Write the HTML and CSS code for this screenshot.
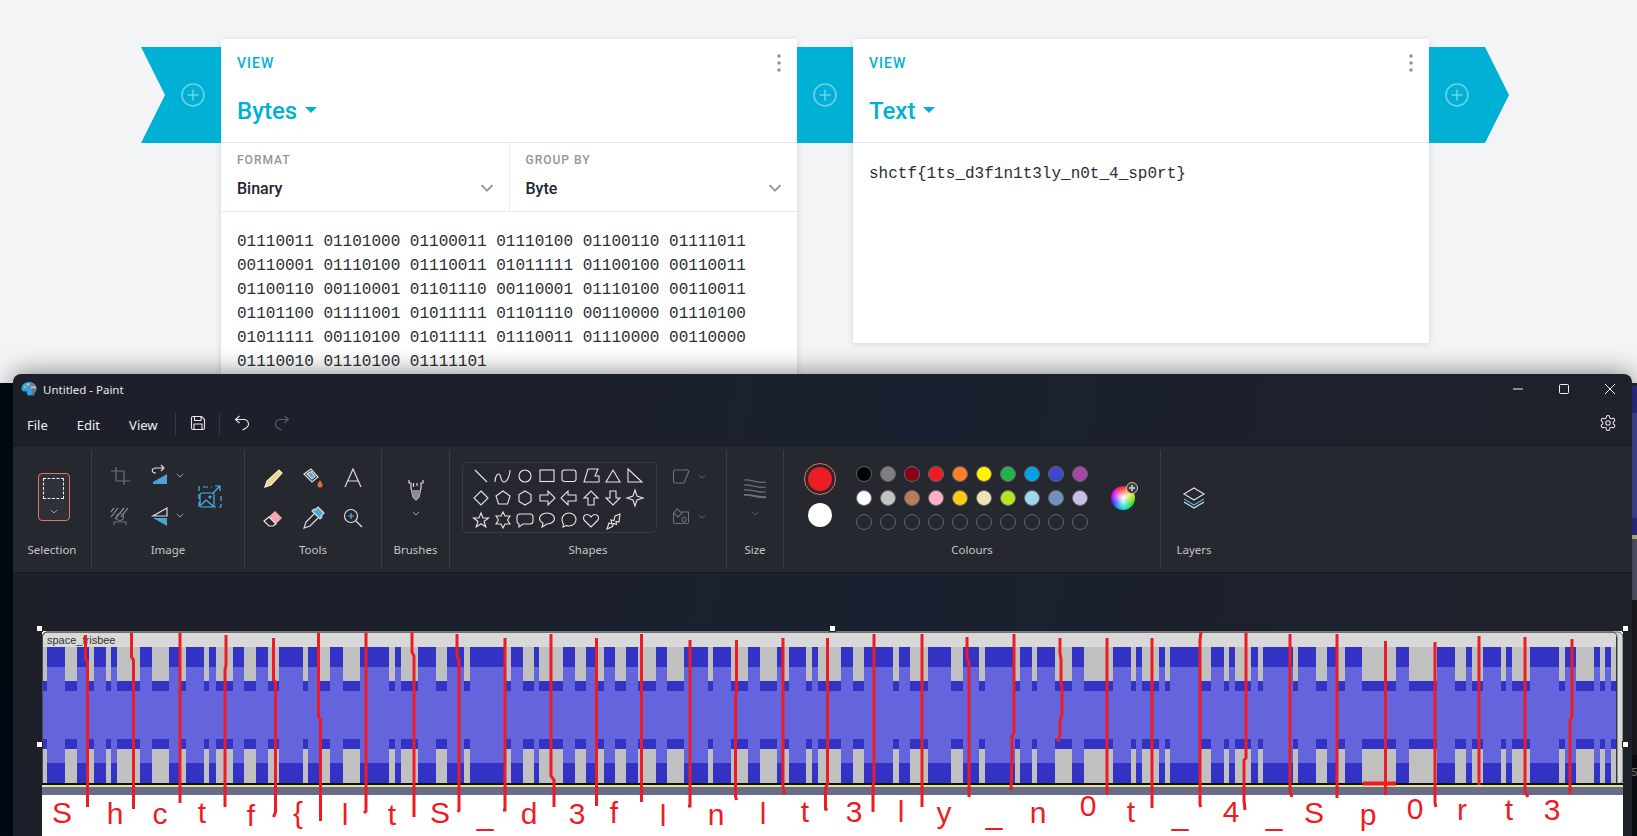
FILE: index.html
```html
<!DOCTYPE html>
<html lang="en">
<head>
  <meta charset="UTF-8" />
  <title>Untitled - Paint</title>
  <link rel="stylesheet" href="styles.css">
</head>
<body>

  <svg class="defs" width="0" height="0">
    <symbol id="plus" viewBox="0 0 24 24"><circle cx="12" cy="12" r="11" /><path d="M12 6.5v11M6.5 12h11" /></symbol>
    <symbol id="dots" viewBox="0 0 4 18"><circle cx="2" cy="2" r="1.8" /><circle cx="2" cy="9" r="1.8" /><circle cx="2" cy="16" r="1.8" /></symbol>
    <symbol id="down" viewBox="0 0 14 8"><path d="M1.5 1.2 7 6.7l5.5-5.5" /></symbol>
  </svg>

  <!-- browser page behind the paint window -->
  <main class="pipeline">
    <div class="ribbon ribbon-start"><svg class="plus"><use href="#plus" /></svg></div>

    <section class="card">
      <header class="card-head">
        <div class="card-top">
          <span class="view-label">View</span>
          <svg class="dots"><use href="#dots" /></svg>
        </div>
        <h2 class="card-title">Bytes <i class="caret"></i></h2>
      </header>
      <div class="options">
        <div class="option">
          <span class="option-label">Format</span>
          <div class="option-value">Binary <svg class="chevron"><use href="#down" /></svg></div>
        </div>
        <div class="option">
          <span class="option-label">Group by</span>
          <div class="option-value">Byte <svg class="chevron"><use href="#down" /></svg></div>
        </div>
      </div>
      <div class="card-code">01110011 01101000 01100011 01110100 01100110 01111011 00110001 01110100 01110011 01011111 01100100 00110011 01100110 00110001 01101110 00110001 01110100 00110011 01101100 01111001 01011111 01101110 00110000 01110100 01011111 00110100 01011111 01110011 01110000 00110000 01110010 01110100 01111101</div>
    </section>

    <div class="ribbon"><svg class="plus"><use href="#plus" /></svg></div>

    <section class="card card-short">
      <header class="card-head">
        <div class="card-top">
          <span class="view-label">View</span>
          <svg class="dots"><use href="#dots" /></svg>
        </div>
        <h2 class="card-title">Text <i class="caret"></i></h2>
      </header>
      <div class="card-code">shctf{1ts_d3f1n1t3ly_n0t_4_sp0rt}</div>
    </section>

    <div class="ribbon ribbon-end"><svg class="plus"><use href="#plus" /></svg></div>
  </main>

  <div class="desktop"></div>
  <div class="desktop-right"><span class="desktop-digit">5</span></div>

  <!-- paint window -->
  <div class="paint">
    <div class="titlebar">
      <svg class="app-icon" viewBox="0 0 16 16">
        <path fill="#2f9fe6" d="M8 1C3.5 1 .5 4 .5 7.6c0 2.6 2 3.4 3.3 2.8 1.2-.5 2.3.2 2.1 1.5-.2 1.700 1 2.600 2.600 2.600C12.500 14.500 15.500 11 15.500 7.500 15.500 3.500 12 1 8 1z" />
        <circle cx="4" cy="6" r="1.300" fill="#7fd858" />
        <circle cx="7" cy="3.500" r="1.300" fill="#f4c430" />
        <circle cx="11" cy="3.800" r="1.300" fill="#ee4b5a" />
        <path fill="#e8b48a" d="M10 5.500h5v2h-5z" />
        <path fill="#9a5a2a" d="M11.500 7.500h2L13.200 15h-1.400z" />
      </svg>
      <span class="app-name">Untitled - Paint</span>
      <div class="win-controls">
        <svg class="win-btn" viewBox="0 0 12 12"><path d="M1 6h10" /></svg>
        <svg class="win-btn" viewBox="0 0 12 12"><rect x="1.500" y="1.500" width="9" height="9" rx="1" /></svg>
        <svg class="win-btn" viewBox="0 0 12 12"><path d="m1 1 10 10M11 1 1 11" /></svg>
      </div>
    </div>

    <div class="menubar">
      <span class="menu-item">File</span>
      <span class="menu-item">Edit</span>
      <span class="menu-item">View</span>
      <i class="menu-sep"></i>
      <svg class="menu-icon menu-save" viewBox="0 0 16 16">
        <path d="M1.500 3a1.500 1.500 0 0 1 1.500-1.500h8.500l3 3V13a1.500 1.500 0 0 1-1.500 1.500H3A1.500 1.500 0 0 1 1.500 13z" />
        <path d="M4.500 1.500v4h6.500v-4M4 14.500V9h8v5.500" />
      </svg>
      <i class="menu-sep menu-sep-two"></i>
      <svg class="menu-icon menu-undo" viewBox="0 0 16 16"><path d="M5.500 1 1.500 4.500l4 3.500M1.500 4.500H10a4.500 4.500 0 0 1 2 8.500l-3.500 2" /></svg>
      <svg class="menu-icon menu-redo" viewBox="0 0 16 16"><path d="m10.500 1 4 3.500-4 3.500M14.500 4.500H6a4.500 4.500 0 0 0-2 8.500l3.500 2" /></svg>
      <svg class="gear" viewBox="0 0 24 24">
        <path d="M12.220 2h-.44a2 2 0 0 0-2 2v.18a2 2 0 0 1-1 1.730l-.43.25a2 2 0 0 1-2 0l-.15-.08a2 2 0 0 0-2.730.73l-.22.38a2 2 0 0 0 .73 2.730l.15.1a2 2 0 0 1 1 1.720v.51a2 2 0 0 1-1 1.740l-.15.09a2 2 0 0 0-.73 2.730l.22.38a2 2 0 0 0 2.730.73l.15-.08a2 2 0 0 1 2 0l.43.25a2 2 0 0 1 1 1.730V20a2 2 0 0 0 2 2h.44a2 2 0 0 0 2-2v-.18a2 2 0 0 1 1-1.730l.43-.25a2 2 0 0 1 2 0l.15.08a2 2 0 0 0 2.730-.73l.22-.39a2 2 0 0 0-.73-2.730l-.15-.08a2 2 0 0 1-1-1.740v-.5a2 2 0 0 1 1-1.740l.15-.09a2 2 0 0 0 .73-2.730l-.22-.38a2 2 0 0 0-2.730-.73l-.15.08a2 2 0 0 1-2 0l-.43-.25a2 2 0 0 1-1-1.730V4a2 2 0 0 0-2-2z" />
        <circle cx="12" cy="12" r="3" />
      </svg>
    </div>

    <div class="toolbar">
      <div class="group group-selection">
        <div class="group-body">
          <div class="select-tool">
            <i class="select-dash"></i>
            <svg class="mini-chev"><use href="#down" /></svg>
          </div>
        </div>
        <div class="group-label">Selection</div>
      </div>

      <div class="group group-image">
        <div class="group-body image-body">
          <div class="image-rows">
            <div class="image-row">
              <svg class="tool tool-off" viewBox="0 0 24 24"><path d="M8 3v14h14M3 7h13v14" /></svg>
              <svg class="tool" viewBox="0 0 24 24"><path d="M8 9C3 9 3 4 8 4h8M13 1l3 3-3 3" /><path class="blue" d="M5 18 19 10v10H5z" /></svg>
              <svg class="mini-chev"><use href="#down" /></svg>
            </div>
            <div class="image-row">
              <svg class="tool tool-off" viewBox="0 0 24 24"><path class="hatch" d="M3 13 10 4M7 15l9-11M13 13l7-9M3 8l3-4" /><circle cx="12" cy="13" r="3.500" /><path d="M6 21v-3h12v3" /></svg>
              <svg class="tool" viewBox="0 0 24 24"><path d="M19 4v8H5z" /><path class="blue" d="M5 14h14v8z" /></svg>
              <svg class="mini-chev"><use href="#down" /></svg>
            </div>
          </div>
          <svg class="resize-icon" viewBox="0 0 24 24"><path stroke-dasharray="5 3" d="M1 23V3h13" /><path stroke-dasharray="5 3" d="M23 12v11H16" /><path d="M15 9 22 2M17 2h5v5" /><rect x="2" y="9" width="14" height="14" rx="2" /><path d="m3 21 5-5 7 6" /><circle cx="12" cy="13" r="1" /></svg>
        </div>
        <div class="group-label">Image</div>
      </div>

      <div class="group group-tools">
        <div class="group-body tools-grid">
          <svg class="tool" viewBox="0 0 24 24"><path class="pencil" d="M4 21l2-6L18 4l3 3L10 19z" /></svg>
          <svg class="tool" viewBox="0 0 24 24"><path d="M3 8 10 3l7 8-6 5z" /><path class="lblue" d="M6 8 10 5.500l4 5-3 2.500z" /><path class="orange" d="M19 14c-2 3-2.500 4-2.500 5a2.500 2.500 0 0 0 5 0c0-1-.5-2-2.500-5z" /></svg>
          <svg class="tool" viewBox="0 0 24 24"><path d="M4 21 12 3l8 18M7 15h10" /></svg>
          <svg class="tool" viewBox="0 0 24 24"><path class="pink" d="M3 15 14 5l7 7-8 8H8z" /><path class="white" d="M3 15l5-4 7 7-3 2H8z" /></svg>
          <svg class="tool" viewBox="0 0 24 24"><path d="M13 8 5 16l-2 6 6-2 8-8" /><path class="lblue" d="M14 4l3-3 6 6-3 3 1 1-2 2-8-8 2-2z" /></svg>
          <svg class="tool" viewBox="0 0 24 24"><circle cx="10" cy="10" r="6.500" /><path d="m15 15 6 6" /><path class="bstroke" d="M10 7v6M7 10h6" /></svg>
        </div>
        <div class="group-label">Tools</div>
      </div>

      <div class="group group-brushes">
        <div class="group-body drop-body">
          <svg class="tool" viewBox="0 0 24 24"><path d="M5 3v3l2 0v5l2 9 3 3 3-3 2-9V6l2 0V3" /><path class="grey" d="M7.200 13h9.600l-1.800 7-3 3-3-3z" /><path d="M9.500 6v4M13 6v3" /></svg>
          <svg class="mini-chev"><use href="#down" /></svg>
        </div>
        <div class="group-label">Brushes</div>
      </div>

      <div class="group group-shapes">
        <div class="group-body shapes-body">
          <div class="shape-box">
            <svg class="shape" viewBox="0 0 22 22"><path d="m5 5 12 12" /></svg>
            <svg class="shape" viewBox="0 0 22 22"><path d="M3 17c0-6 3-10 5-7 1 2 1 7 4 7 3 0 6-6 6-12" /></svg>
            <svg class="shape" viewBox="0 0 22 22"><circle cx="11" cy="11" r="6" /></svg>
            <svg class="shape" viewBox="0 0 22 22"><rect x="4" y="5" width="14" height="11.500" /></svg>
            <svg class="shape" viewBox="0 0 22 22"><rect x="4" y="5" width="14" height="11.500" rx="2.500" /></svg>
            <svg class="shape" viewBox="0 0 22 22"><path d="M8 4h10l-3 7h4v6H4z" /></svg>
            <svg class="shape" viewBox="0 0 22 22"><path d="M11 5 18 17H4z" /></svg>
            <svg class="shape" viewBox="0 0 22 22"><path d="M4 4 18 17H4z" /></svg>
            <svg class="shape" viewBox="0 0 22 22"><path d="m11 4 7 7-7 7-7-7z" /></svg>
            <svg class="shape" viewBox="0 0 22 22"><path d="m11 4 7 5-2.500 8h-9L4 9z" /></svg>
            <svg class="shape" viewBox="0 0 22 22"><path d="m11 4 6 3.500v7L11 18l-6-3.500v-7z" /></svg>
            <svg class="shape" viewBox="0 0 22 22"><path d="M4 8h8V4l7 7-7 7v-4H4z" /></svg>
            <svg class="shape" viewBox="0 0 22 22"><path d="M18 8h-8V4l-7 7 7 7v-4h8z" /></svg>
            <svg class="shape" viewBox="0 0 22 22"><path d="M8 18v-7H4l7-7 7 7h-4v7z" /></svg>
            <svg class="shape" viewBox="0 0 22 22"><path d="M8 4v7H4l7 7 7-7h-4V4z" /></svg>
            <svg class="shape" viewBox="0 0 22 22"><path d="m11 3 2 6 6 2-6 2-2 6-2-6-6-2 6-2z" /></svg>
            <svg class="shape" viewBox="0 0 22 22"><path d="m11 4 2 5h5.500l-4.500 3.500 1.800 5.500-4.800-3.300L6.200 18 8 12.500 3.500 9H9z" /></svg>
            <svg class="shape" viewBox="0 0 22 22"><path d="m11 3 2 4h5l-2.500 4 2.500 4h-5l-2 4-2-4H4l2.500-4L4 7h5z" /></svg>
            <svg class="shape" viewBox="0 0 22 22"><path d="M6 5h10a3 3 0 0 1 3 3v4a3 3 0 0 1-3 3H9l-4 3v-3a3 3 0 0 1-2-3V8a3 3 0 0 1 3-3z" /></svg>
            <svg class="shape" viewBox="0 0 22 22"><path d="M11 4c4.500 0 7.500 2.700 7.500 5.500S15.500 15 11 15l-5 3 1-3.800C5 13 3.500 11.500 3.500 9.500 3.500 6.700 6.500 4 11 4z" /></svg>
            <svg class="shape" viewBox="0 0 22 22"><path d="M11 4c4 0 7 3 7 6.500S15 17 11 17c-1 0-2 0-3-.5L5 18l.5-3C4 13.500 4 12 4 10.500 4 7 7 4 11 4z" /></svg>
            <svg class="shape" viewBox="0 0 22 22"><path d="M11 18 4.500 11.500C2.500 9.500 3.500 5.500 7 5.500c2 0 3 1 4 2.500 1-1.500 2-2.500 4-2.500 3.500 0 4.500 4 2.500 6z" /></svg>
            <svg class="shape" viewBox="0 0 22 22"><path d="M5 20l2-6 3 1-1-4 3 .5L13 7l5-2-1 8-3-.5 .5 3-3-1-1 3z" /></svg>
          </div>
          <div class="shape-styles">
            <div class="style-row">
              <svg class="style-icon" viewBox="0 0 18 18"><path d="M12 3H3a1.500 1.500 0 0 0-1.500 1.500v10A1.500 1.500 0 0 0 3 16h9l5-12-2-1.500z" /></svg>
              <svg class="mini-chev"><use href="#down" /></svg>
            </div>
            <div class="style-row">
              <svg class="style-icon" viewBox="0 0 18 18"><path d="M1.500 6v9a1.500 1.500 0 0 0 1.500 1.500h12a1.500 1.500 0 0 0 1.500-1.500V5H10" /><path d="m5 2 5 4-4 4-4-4zM12 10a2 2.500 0 1 0 .1 0z" /></svg>
              <svg class="mini-chev"><use href="#down" /></svg>
            </div>
          </div>
        </div>
        <div class="group-label">Shapes</div>
      </div>

      <div class="group group-size">
        <div class="group-body drop-body">
          <svg class="tool tool-off" viewBox="0 0 24 24"><path d="M1 3c7-1 14 4 22 2M1 8c7-1 14 4 22 2M1 13c7-1 14 3 22 2" /><path class="thick" d="M1 18c7-1 14 3 22 2" /></svg>
          <svg class="mini-chev mini-chev-off"><use href="#down" /></svg>
        </div>
        <div class="group-label">Size</div>
      </div>

      <div class="group group-colours">
        <div class="group-body colours-body">
          <div class="active-colours">
            <div class="colour-one"><i></i></div>
            <i class="colour-two"></i>
          </div>
          <div class="swatches">
            <i class="swatch s-black"></i><i class="swatch s-grey"></i><i class="swatch s-maroon"></i><i class="swatch s-red"></i><i class="swatch s-orange"></i><i class="swatch s-yellow"></i><i class="swatch s-green"></i><i class="swatch s-sky"></i><i class="swatch s-indigo"></i><i class="swatch s-purple"></i>
            <i class="swatch s-white"></i><i class="swatch s-silver"></i><i class="swatch s-brown"></i><i class="swatch s-pink"></i><i class="swatch s-gold"></i><i class="swatch s-cream"></i><i class="swatch s-lime"></i><i class="swatch s-aqua"></i><i class="swatch s-steel"></i><i class="swatch s-lav"></i>
            <i class="swatch"></i><i class="swatch"></i><i class="swatch"></i><i class="swatch"></i><i class="swatch"></i><i class="swatch"></i><i class="swatch"></i><i class="swatch"></i><i class="swatch"></i><i class="swatch"></i>
          </div>
          <div class="wheel"><i class="wheel-add"></i></div>
        </div>
        <div class="group-label">Colours</div>
      </div>

      <div class="group group-layers">
        <div class="group-body layers-body">
          <svg class="tool" viewBox="0 0 24 24"><path d="M12 2 22 8l-10 6L2 8z" /><path class="bstroke" d="m2 13 10 6 10-6" /><path d="m2 16 10 6 10-6" /></svg>
        </div>
        <div class="group-label">Layers</div>
      </div>
    </div>

    <div class="canvas-area">
      <i class="handle handle-tl"></i><i class="handle handle-tm"></i><i class="handle handle-tr"></i>
      <i class="handle handle-ml"></i><i class="handle handle-mr"></i>
      <svg class="drawing" viewBox="42 631 1581 205" width="1581" height="205">
        <defs>
          <g id="gaps">
            <rect x="42" y="0" width="5" height="1" /><rect x="65" y="0" width="11.500" height="1" /><rect x="89" y="0" width="5" height="1" /><rect x="106" y="0" width="5" height="1" /><rect x="117" y="0" width="23" height="1" /><rect x="152" y="0" width="17" height="1" /><rect x="181" y="0" width="5" height="1" /><rect x="204" y="0" width="5" height="1" /><rect x="216" y="0" width="17" height="1" /><rect x="244" y="0" width="12" height="1" /><rect x="268" y="0" width="11" height="1" /><rect x="303" y="0" width="5" height="1" /><rect x="320" y="0" width="10" height="1" /><rect x="343" y="0" width="17" height="1" /><rect x="389" y="0" width="6" height="1" /><rect x="401" y="0" width="17" height="1" /><rect x="436" y="0" width="11" height="1" /><rect x="464" y="0" width="6" height="1" /><rect x="506" y="0" width="5" height="1" /><rect x="522.500" y="0" width="11" height="1" /><rect x="539" y="0" width="24" height="1" />
            <rect x="574.500" y="0" width="11" height="1" /><rect x="596" y="0" width="7.500" height="1" /><rect x="615" y="0" width="11" height="1" /><rect x="638" y="0" width="18" height="1" /><rect x="667" y="0" width="17" height="1" /><rect x="708" y="0" width="5" height="1" /><rect x="731" y="0" width="17" height="1" /><rect x="760" y="0" width="17" height="1" /><rect x="783" y="0" width="6" height="1" /><rect x="806" y="0" width="5.500" height="1" /><rect x="817.500" y="0" width="23.500" height="1" /><rect x="852.500" y="0" width="11" height="1" /><rect x="893" y="0" width="5.500" height="1" /><rect x="910" y="0" width="17.500" height="1" /><rect x="951" y="0" width="12" height="1" /><rect x="979" y="0" width="6" height="1" /><rect x="1015" y="0" width="5" height="1" /><rect x="1032" y="0" width="5" height="1" /><rect x="1055" y="0" width="17" height="1" /><rect x="1084" y="0" width="29" height="1" />
            <rect x="1131" y="0" width="5" height="1" /><rect x="1142" y="0" width="17" height="1" /><rect x="1165" y="0" width="5" height="1" /><rect x="1201" y="0" width="10" height="1" /><rect x="1223.500" y="0" width="5.500" height="1" /><rect x="1234.500" y="0" width="16.500" height="1" /><rect x="1257.500" y="0" width="5.500" height="1" /><rect x="1293" y="0" width="5" height="1" /><rect x="1316" y="0" width="11" height="1" /><rect x="1337.500" y="0" width="7" height="1" /><rect x="1362" y="0" width="34" height="1" /><rect x="1408.500" y="0" width="28.500" height="1" /><rect x="1455" y="0" width="11" height="1" /><rect x="1472" y="0" width="11" height="1" /><rect x="1501" y="0" width="5" height="1" /><rect x="1512" y="0" width="18" height="1" /><rect x="1559" y="0" width="6" height="1" /><rect x="1576" y="0" width="18" height="1" /><rect x="1600" y="0" width="5" height="1" /><rect x="1611" y="0" width="5.500" height="1" />
          </g>
        </defs>
        <rect class="image-white" x="42" y="631" width="1581" height="205" />
        <rect class="track-panel" x="42" y="632" width="1581" height="152" rx="5" />
        <rect class="track-dark" x="42" y="647" width="1575" height="136" />
        <rect class="track-light" x="42" y="667" width="1575" height="96" />
        <use class="gap-grey" href="#gaps" transform="translate(0 647) scale(1 34)" />
        <use class="gap-dark" href="#gaps" transform="translate(0 681) scale(1 10)" />
        <use class="gap-dark" href="#gaps" transform="translate(0 739) scale(1 10)" />
        <use class="gap-grey" href="#gaps" transform="translate(0 749) scale(1 34)" />
        <rect class="track-edge" x="1616" y="637" width="1" height="146" />
        <path class="track-corner" d="M42.500 783V637a5 5 0 0 1 5-5H1612a5 5 0 0 1 5 5v146" />
        <text class="track-name" x="47" y="644">space_frisbee</text>
        <rect class="track-black" x="42" y="783" width="1581" height="2" />
        <rect class="track-yellow" x="42" y="785" width="1581" height="2" />
        <rect class="track-band" x="42" y="787" width="1581" height="8" />

        <g class="marks">
          <path d="M85.500 635v24l2 3v145" /><path d="M131.500 633v24l2 3v149" /><path d="M180 633v170" /><path d="M226 635v30l-1 5v137" /><path d="M273.500 638v42l2 2v130l-2 5" /><path d="M318.500 633v84l2 2v102" /><path d="M366 633v178l-2 2" /><path d="M412 632v20l2 4v161" /><path d="M457 634v23l2 3v150l-1 2" /><path d="M505 638v172l-2 0" /><path d="M551 634v142l3 4v27" /><path d="M596.500 638v168" /><path d="M641.500 634v168" /><path d="M690 640v166l-2 0" /><path d="M736.500 640v52l-1 4v100l1 4" /><path d="M783 638v150l2 6" /><path d="M827.500 638v146l-2 4v21l2 1" /><path d="M874 634v148l-1 5v25" /><path d="M922 634v173" /><path d="M967 637v22l2 3v135" /><path d="M1014 634v98l-2 5v22l-1 31" /><path d="M1060 638v15l1 6v24l1 4v27l-2 6v14l-2 8" />
          <path d="M1107 638v155l1 1" /><path d="M1152 638v170" /><path d="M1201 632l-1 8v165l1 2" /><path d="M1246 633v125l-2 2v40l1 10" /><path d="M1290 634v158l2 5" /><path d="M1337 634v164" /><path d="M1385.500 641v154" /><path d="M1435 642v161l1 4" /><path d="M1479 636v149" /><path d="M1525 637v155l3 5" /><path d="M1572 639v78l-2 3v74" />
          <path class="mark-thick" d="M1363 783.500h33" />
        </g>
        <g class="scribbles">
          <text x="62" y="823">S</text><text x="115" y="824">h</text><text x="160" y="824">c</text><text x="202" y="823">t</text><text x="251" y="826">f</text><text x="298" y="823">{</text><text x="345" y="825">l</text><text x="392" y="825">t</text><text x="440" y="823">S</text><text x="485" y="825">_</text><text x="529" y="824">d</text>
          <text x="577" y="824">3</text><text x="614" y="823">f</text><text x="663" y="826">l</text><text x="716" y="825">n</text><text x="763" y="824">l</text><text x="805" y="822">t</text><text x="854" y="822">3</text><text x="901" y="822">l</text><text x="944" y="823">y</text><text x="994" y="824">_</text><text x="1038" y="823">n</text><text x="1088" y="816">0</text>
          <text x="1131" y="822">t</text><text x="1180" y="825">_</text><text x="1231" y="822">4</text><text x="1274" y="825">_</text><text x="1314" y="823">S</text><text x="1368" y="825">p</text><text x="1415" y="819">0</text><text x="1462" y="820">r</text><text x="1509" y="820">t</text><text x="1552" y="820">3</text>
        </g>
      </svg>
    </div>
  </div>

</body>
</html>
```

FILE: styles.css
```css
html, body {
  margin: 0;
  height: 100%;
}
body {
  position: relative;
  width: 1637px;
  height: 836px;
  overflow: hidden;
  background: #f3f4f6;
  font-family: Roboto, "Liberation Sans", sans-serif;
}
.defs {
  position: absolute;
}
i {
  display: block;
}

/* page behind */
.pipeline {
  display: flex;
  align-items: flex-start;
  padding: 39px 0 0 141px;
}
.ribbon {
  display: flex;
  align-items: center;
  justify-content: center;
  flex: none;
  width: 56px;
  height: 96px;
  margin-top: 8px;
  background: #00b1d5;
}
.ribbon-start {
  width: 80px;
  padding-left: 24px;
  box-sizing: border-box;
  clip-path: polygon(0 0, 100% 0, 100% 100%, 0 100%, 24px 50%);
}
.ribbon-end {
  width: 80px;
  padding-right: 24px;
  box-sizing: border-box;
  clip-path: polygon(0 0, 56px 0, 100% 50%, 56px 100%, 0 100%);
}
.plus {
  width: 24px;
  height: 24px;
  fill: none;
  stroke: rgba(255,255,255,0.42);
  stroke-width: 1.6;
}
.card {
  flex: none;
  width: 576px;
  height: 420px;
  background: #fff;
  border-radius: 2px;
  box-shadow: 0 1px 6px rgba(30,40,60,0.14);
}
.card-short {
  height: 304px;
}
.card-head {
  height: 104px;
  box-sizing: border-box;
  padding: 15px 16px 0;
  border-bottom: 1px solid #e4e9ef;
}
.card-top {
  display: flex;
  align-items: center;
  justify-content: space-between;
  height: 18px;
}
.view-label {
  font-size: 14px;
  font-weight: 500;
  letter-spacing: 1px;
  text-transform: uppercase;
  color: #00b1d5;
}
.dots {
  width: 4px;
  height: 18px;
  fill: #8d949c;
}
.card-title {
  display: flex;
  align-items: center;
  height: 32px;
  margin: 23px 0 0;
  font-size: 24px;
  font-weight: 500;
  color: #00b1d5;
}
.caret {
  width: 0;
  height: 0;
  margin: -2px 0 0 8px;
  border-left: 6px solid transparent;
  border-right: 6px solid transparent;
  border-top: 6px solid #00b1d5;
}
.options {
  display: flex;
  height: 68px;
  border-bottom: 1px solid #e8ebef;
}
.option {
  flex: 1;
  box-sizing: border-box;
  padding: 9px 16px 0;
}
.option + .option {
  border-left: 1px solid #e8ebef;
}
.option-label {
  display: block;
  height: 16px;
  font-size: 12px;
  line-height: 16px;
  font-weight: 500;
  letter-spacing: 1px;
  text-transform: uppercase;
  color: #8e96a0;
}
.option-value {
  display: flex;
  align-items: center;
  justify-content: space-between;
  height: 24px;
  margin-top: 8px;
  font-size: 16px;
  font-weight: 500;
  color: #21262c;
}
.chevron {
  width: 14px;
  height: 8px;
  margin-right: -1px;
  fill: none;
  stroke: #8e96a0;
  stroke-width: 1.8;
}
.card-code {
  padding: 18px 16px 0;
  font-family: "Liberation Mono", monospace;
  font-size: 16px;
  line-height: 24px;
  color: #2a2f35;
}
.card-short .card-code {
  padding-top: 19px;
}

/* stuff on the desktop */
.desktop {
  position: absolute;
  left: 0;
  right: 0;
  top: 383px;
  bottom: 0;
  background: linear-gradient(90deg, #030a15, #020c1c);
}
.desktop-right {
  position: absolute;
  left: 1632px;
  right: 0;
  top: 383px;
  bottom: 0;
  overflow: hidden;
  background: linear-gradient(180deg, #2c2c30 0 3px, #30309a 3px 30px, #4b4bb0 30px 135px, #30309a 135px 152px, #d0cf8a 152px 156px, #5c5e72 156px 217px, #1e2024 217px 372px, #0b0f14 372px);
}
.desktop-digit {
  position: absolute;
  left: -1px;
  top: 383px;
  font-size: 11px;
  color: #8a8f96;
}

/* paint window */
.paint {
  position: absolute;
  left: 13px;
  top: 374px;
  width: 1619px;
  height: 462px;
  display: flex;
  flex-direction: column;
  border-radius: 8px 8px 0 0;
  background: linear-gradient(100deg, #1d2029, #1b2030 55%, #1e2128);
  box-shadow: 0 0 26px rgba(0,0,0,0.5);
  font-family: "Noto Sans", "Open Sans", sans-serif;
  color: #f0f0f0;
}
.titlebar {
  display: flex;
  align-items: center;
  height: 30px;
  padding-top: 0;
  flex: none;
}
.app-icon {
  width: 16px;
  height: 16px;
  margin-left: 8px;
}
.app-name {
  margin-left: 6px;
  font-size: 11.5px;
  color: #e8e8e8;
}
.win-controls {
  display: flex;
  gap: 34px;
  margin-left: auto;
  margin-right: 16px;
}
.win-btn {
  width: 12px;
  height: 12px;
  fill: none;
  stroke: #f2f2f2;
  stroke-width: 1;
}
.menubar {
  display: flex;
  align-items: center;
  height: 41px;
  flex: none;
  padding-left: 14px;
}
.menu-item {
  margin-right: 29px;
  font-size: 13px;
}
.menu-item:nth-child(3) {
  margin-right: 17px;
}
.menu-sep {
  width: 1px;
  height: 23px;
  background: #353841;
}
.menu-sep-two {
  margin-left: 13px;
}
.menu-icon {
  width: 16px;
  height: 16px;
  margin-top: -4px;
  fill: none;
  stroke: #e8e8e8;
  stroke-width: 1.1;
}
.menu-save {
  margin-left: 14px;
}
.menu-undo {
  margin-left: 14px;
}
.menu-redo {
  margin-left: 24px;
  stroke: #5b5e66;
}
.gear {
  width: 18px;
  height: 18px;
  margin: -4px 15px 0 auto;
  fill: none;
  stroke: #eaeaea;
  stroke-width: 1.4;
}
.toolbar {
  display: flex;
  flex: none;
  box-sizing: border-box;
  height: 128px;
  padding: 4px 0;
  background: #26282f;
  border-top: 1px solid #16181d;
  border-bottom: 1px solid #16181d;
}
.group {
  display: flex;
  flex-direction: column;
  flex: none;
  box-sizing: border-box;
  border-right: 1px solid #3a3d45;
}
.group-layers {
  border-right: none;
}
.group-body {
  flex: 1;
  min-height: 0;
}
.group-label {
  height: 20px;
  margin-bottom: 8px;
  font-size: 11.5px;
  line-height: 20px;
  text-align: center;
  color: #c4c5c8;
}
.group-selection { width: 79px; }
.group-image { width: 153px; }
.group-tools { width: 137px; }
.group-brushes { width: 68px; }
.group-shapes { width: 277px; }
.group-size { width: 57px; }
.group-colours { width: 377px; }
.group-layers { width: 66px; }

.tool {
  display: block;
  flex: none;
  width: 24px;
  height: 24px;
  fill: none;
  stroke: #dcdcdc;
  stroke-width: 1.2;
}
.tool-off {
  stroke: #6d7078;
}
.tool .blue { fill: #4aa3d4; stroke: none; }
.tool .lblue { fill: #4aa8dc; }
.tool .bstroke { stroke: #4ab4ea; }
.tool .orange { fill: #e8683a; stroke: none; }
.tool .pencil { fill: #efd48e; stroke: #f4ecd0; }
.tool .pink { fill: #f4a9ae; stroke: none; }
.tool .white { fill: #26282f; stroke: #e8e8e8; }
.tool .grey { fill: #8a8c90; stroke: none; }
.tool .hatch { stroke: #8e9198; }
.tool .thick { stroke-width: 2; }
.mini-chev {
  display: block;
  flex: none;
  width: 8px;
  height: 5px;
  fill: none;
  stroke: #a8aab0;
  stroke-width: 1.6;
}
.mini-chev-off,
.style-row .mini-chev {
  stroke: #62656c;
}

.select-tool {
  box-sizing: border-box;
  width: 32px;
  height: 48px;
  margin: 23px 0 0 25px;
  padding: 4px 0 0 4px;
  border: 1px solid #e2765a;
  border-radius: 4px;
  background: #2f3138;
}
.select-dash {
  width: 21px;
  height: 21px;
  box-sizing: border-box;
  border: 1px dashed #f2f2f2;
}
.select-tool .mini-chev {
  margin: 10px 0 0 7px;
}
.image-body {
  display: flex;
  align-items: center;
  padding: 16px 0 15px 16px;
}
.image-rows {
  display: flex;
  flex-direction: column;
  gap: 16px;
}
.image-row {
  display: flex;
  align-items: center;
  gap: 16px;
}
.image-row .mini-chev {
  margin: 0 1px 0 -12px;
}
.resize-icon {
  width: 24px;
  height: 24px;
  margin-left: 13px;
  fill: none;
  stroke: #4ab4ea;
  stroke-width: 1.2;
}
.tools-grid {
  display: grid;
  grid-template-columns: repeat(3, 24px);
  grid-auto-rows: 24px;
  gap: 16px;
  padding: 16px 0 0 16px;
}
.drop-body {
  display: flex;
  flex-direction: column;
  align-items: center;
  padding-top: 27px;
}
.drop-body .mini-chev {
  margin-top: 10px;
}
.shapes-body {
  display: flex;
  padding: 12px 0 0 12px;
}
.shape-box {
  display: grid;
  grid-template-columns: repeat(8, 22px);
  grid-auto-rows: 22px;
  align-content: start;
  box-sizing: border-box;
  width: 195px;
  height: 71px;
  padding: 2px 0 0 7px;
  border: 1px solid #383b44;
  border-radius: 5px;
}
.shape {
  width: 22px;
  height: 22px;
  fill: none;
  stroke: #e6e6e6;
  stroke-width: 1.1;
}
.shape-styles {
  display: flex;
  flex-direction: column;
  gap: 22px;
  margin: 5px 0 0 15px;
}
.style-row {
  display: flex;
  align-items: center;
  gap: 8px;
  height: 18px;
}
.style-icon {
  width: 18px;
  height: 18px;
  fill: none;
  stroke: #6d7078;
  stroke-width: 1.1;
}
.colours-body {
  display: flex;
  align-items: flex-start;
  padding: 13px 0 0 20px;
}
.active-colours {
  flex: none;
  width: 32px;
}
.colour-one {
  box-sizing: border-box;
  width: 32px;
  height: 32px;
  padding: 3px;
  border: 1px solid #e8734f;
  border-radius: 50%;
}
.colour-one i {
  width: 24px;
  height: 24px;
  border-radius: 50%;
  background: #ed1c24;
}
.colour-two {
  width: 24px;
  height: 24px;
  margin: 8px 0 0 4px;
  border-radius: 50%;
  background: #fff;
}
.swatches {
  display: grid;
  grid-template-columns: repeat(10, 16px);
  grid-auto-rows: 16px;
  gap: 8px;
  margin: 3px 0 0 20px;
}
.swatch {
  box-sizing: border-box;
  width: 16px;
  height: 16px;
  border: 1px solid #63666d;
  border-radius: 50%;
}
.s-black { background: #000; }
.s-grey { background: #7f7f7f; }
.s-maroon { background: #880015; }
.s-red { background: #ed1c24; }
.s-orange { background: #ff7f27; }
.s-yellow { background: #fff200; }
.s-green { background: #22b14c; }
.s-sky { background: #00a2e8; }
.s-indigo { background: #3f48cc; }
.s-purple { background: #a349a4; }
.s-white { background: #fff; }
.s-silver { background: #c3c3c3; }
.s-brown { background: #b97a57; }
.s-pink { background: #ffaec9; }
.s-gold { background: #ffc90e; }
.s-cream { background: #efe4b0; }
.s-lime { background: #b5e61d; }
.s-aqua { background: #99d9ea; }
.s-steel { background: #7092be; }
.s-lav { background: #c8bfe7; }
.wheel {
  position: relative;
  flex: none;
  width: 24px;
  height: 24px;
  margin: 23px 0 0 23px;
  border-radius: 50%;
  background:
    radial-gradient(circle, #fff 0, rgba(255,255,255,0) 68%),
    conic-gradient(#ff2020, #ffe000, #20e020, #00e0e0, #2030ff, #e000e0, #ff2020);
}
.wheel-add {
  position: absolute;
  right: -3px;
  top: -4px;
  box-sizing: border-box;
  width: 12px;
  height: 12px;
  border: 1px solid #c0c0c0;
  border-radius: 50%;
  background:
    linear-gradient(#b8b8b8, #b8b8b8) center / 6px 2px no-repeat,
    linear-gradient(#b8b8b8, #b8b8b8) center / 2px 6px no-repeat,
    #3b3d42;
}
.layers-body {
  display: flex;
  justify-content: center;
  padding-top: 36px;
}

/* canvas with the pasted picture */
.canvas-area {
  position: relative;
  flex: 1;
  min-height: 0;
  padding: 58px 0 0 29px;
  overflow: hidden;
}
.drawing {
  display: block;
}
.handle {
  position: absolute;
  width: 5px;
  height: 5px;
  background: #fff;
  border: 1px solid #222;
}
.handle-tl { left: 23px; top: 52px; }
.handle-tm { left: 816px; top: 52px; }
.handle-tr { left: 1609px; top: 52px; }
.handle-ml { left: 23px; top: 168px; }
.handle-mr { left: 1609px; top: 168px; }
.image-white { fill: #fff; }
.track-panel { fill: #d9d9d9; stroke: #555; stroke-width: 1; }
.track-dark { fill: #3232c4; shape-rendering: crispEdges; }
.track-light { fill: #6464dc; shape-rendering: crispEdges; }
.gap-grey { fill: #c0c0c0; shape-rendering: crispEdges; }
.gap-dark { fill: #3232c4; shape-rendering: crispEdges; }
.track-edge { fill: #222; }
.track-corner { fill: none; stroke: #4a4a4a; stroke-width: 1; }
.track-name {
  font-family: "Liberation Sans", sans-serif;
  font-size: 11px;
  fill: #333;
}
.track-black { fill: #111; }
.track-yellow { fill: #e6e68c; }
.track-band { fill: #696d88; }
.marks path {
  fill: none;
  stroke: #ed1c24;
  stroke-width: 3;
}
.marks .mark-thick {
  stroke-width: 4;
}
.scribbles text {
  font-family: "Liberation Sans", sans-serif;
  font-size: 30px;
  text-anchor: middle;
  fill: #ed1c24;
}
```
